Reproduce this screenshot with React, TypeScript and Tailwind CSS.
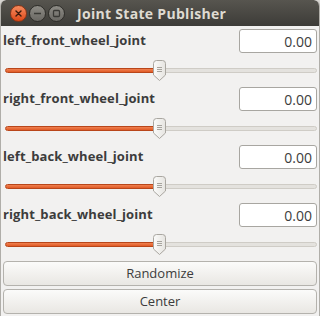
const joints = [
  'left_front_wheel_joint',
  'right_front_wheel_joint',
  'left_back_wheel_joint',
  'right_back_wheel_joint',
];

function TitleButton({ kind }: { kind: 'close' | 'min' | 'max' }) {
  const isClose = kind === 'close';
  return (
    <div
      className={`flex h-[17px] w-[17px] items-center justify-center rounded-full border ${
        isClose
          ? 'border-[#8a3416] bg-gradient-to-b from-[#f58a5c] to-[#dc4714]'
          : 'border-[#2e2d29] bg-gradient-to-b from-[#8d8b85] to-[#6a6863]'
      }`}
    >
      <svg width="9" height="9" viewBox="0 0 9 9">
        {kind === 'close' && (
          <path d="M2 2L7 7M7 2L2 7" stroke="#3a1a0c" strokeWidth="1.4" strokeLinecap="round" />
        )}
        {kind === 'min' && <path d="M1 4.5H8" stroke="#3a3935" strokeWidth="1.4" />}
        {kind === 'max' && (
          <rect x="1.5" y="1.5" width="6" height="6" rx="1" fill="none" stroke="#3a3935" strokeWidth="1.3" />
        )}
      </svg>
    </div>
  );
}

function Slider() {
  return (
    <div className="relative flex h-[34px] items-center pl-[4px] pr-[2px]">
      <div className="flex h-[5px] w-full">
        <div className="h-full w-[153px] rounded-l-full border border-[#b9461a] bg-gradient-to-b from-[#f08150] to-[#e05a24]" />
        <div className="h-full flex-1 rounded-r-full border border-[#cfccc6] bg-[#e4e2de]" />
      </div>
      {/* handle */}
      <svg className="absolute left-[152px] top-[7px]" width="13" height="21" viewBox="0 0 13 21">
        <defs>
          <linearGradient id="hg" x1="0" y1="0" x2="1" y2="0">
            <stop offset="0" stopColor="#fbfbfa" />
            <stop offset="1" stopColor="#e6e4e0" />
          </linearGradient>
        </defs>
        <path
          d="M3.5 0.5H9.5Q12.5 0.5 12.5 3.5V15L6.5 20.5L0.5 15V3.5Q0.5 0.5 3.5 0.5Z"
          fill="url(#hg)"
          stroke="#a9a6a0"
        />
        <path d="M4 7.5H9M4 9.5H9M4 11.5H9" stroke="#a7a49e" strokeWidth="1" />
      </svg>
    </div>
  );
}

function JointRow({ name }: { name: string }) {
  return (
    <div>
      <div className="flex h-[24px] items-center justify-between pl-[2px] pr-[2px]">
        <span className="text-[13px] font-bold tracking-[0.1px] text-[#3c3c3c]">{name}</span>
        <div className="flex h-[24px] w-[78px] items-center justify-end rounded-[3px] border border-[#a8a6a1] bg-white pr-[4px] text-[14px] text-[#3c3c3c]">
          0.00
        </div>
      </div>
      <Slider />
    </div>
  );
}

function Button({ label }: { label: string }) {
  return (
    <div className="ml-[2px] mr-[2px] flex h-[25px] items-center justify-center rounded-[4px] border border-[#b4b2ad] bg-gradient-to-b from-[#fbfbfa] to-[#e9e7e3] text-[13px] text-[#3c3c3c]">
      {label}
    </div>
  );
}

export default function App() {
  return (
    <div className="h-[316px] w-[320px] overflow-hidden bg-[#d7d5d1] font-['Open_Sans',sans-serif]">
      <div className="h-[316px] w-[320px] overflow-hidden rounded-t-[6px] border-x border-[#b0aea9] bg-[#f2f1f0]">
        <div className="-mx-px flex h-[26px] items-center rounded-t-[6px] bg-gradient-to-b from-[#57554f] to-[#3d3c38] pl-[10px]">
          <div className="flex gap-[2px]">
            <TitleButton kind="close" />
            <TitleButton kind="min" />
            <TitleButton kind="max" />
          </div>
          <span className="ml-[12px] text-[14px] font-bold tracking-[0.3px] text-[#dfdbd2]">
            Joint State Publisher
          </span>
        </div>
        <div className="pt-[3px]">
          {joints.map((j) => (
            <JointRow key={j} name={j} />
          ))}
          <div className="flex flex-col gap-[3px]">
            <Button label="Randomize" />
            <Button label="Center" />
          </div>
        </div>
      </div>
    </div>
  );
}
